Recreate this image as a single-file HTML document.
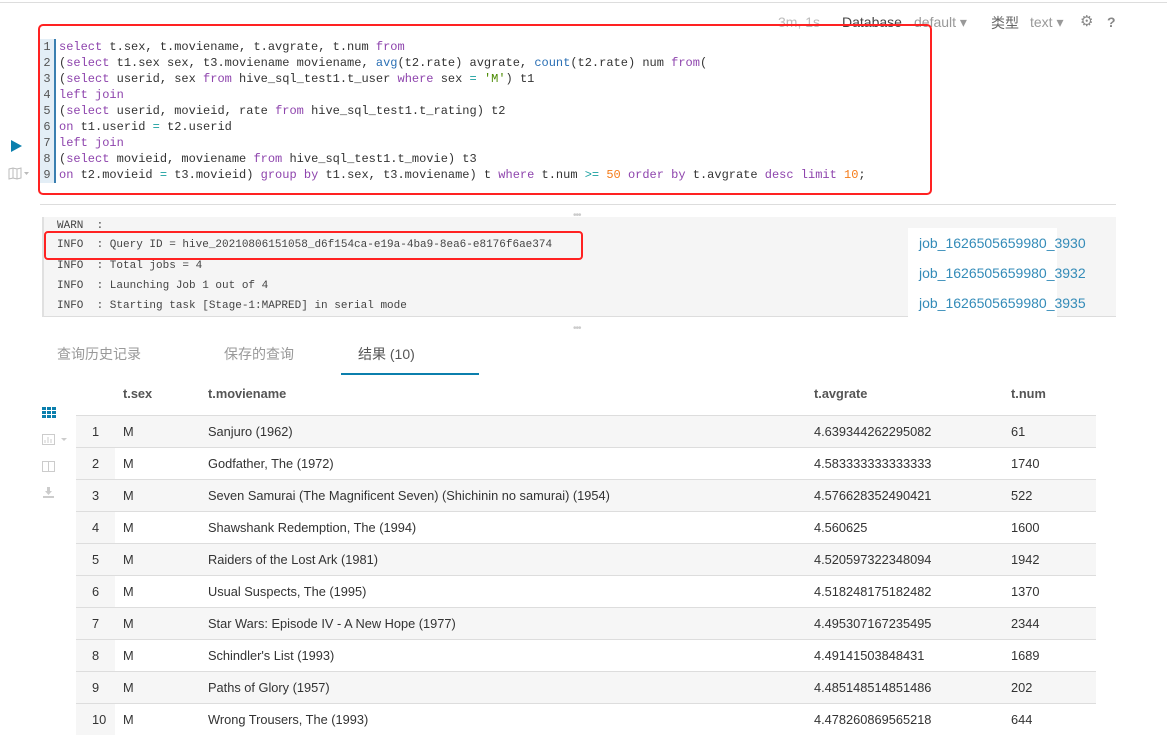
<!DOCTYPE html>
<html><head><meta charset="utf-8"><style>
*{box-sizing:border-box;margin:0;padding:0}
body{width:1167px;height:756px;background:#fff;font-family:"Liberation Sans","Noto Sans CJK SC",sans-serif;position:relative;overflow:hidden;color:#333}
.abs{position:absolute}
.mono{font-family:"Liberation Mono","DejaVu Sans Mono",monospace}
.code{left:59px;top:39px;font-size:12px;line-height:16px;white-space:pre;color:#333}
.gut{left:40px;top:39px;width:16px;height:144px;background:#e3eef6;border-right:2px solid #3a7fb0;font-size:12px;line-height:16px;text-align:center;color:#555}
.k{color:#8e44ad}.f{color:#2a6fb4}.n{color:#f57c1a}.s{color:#4a8a00}.o{color:#1aa0a0}
.log{left:42px;top:217px;width:1074px;height:100px;background:#f5f5f5;border-bottom:1px solid #ddd;border-left:2px solid #e0e0e0}
.log div{position:absolute;left:13px;font-size:11px;color:#444;white-space:pre}
.job{position:absolute;left:919px;font-size:14px;color:#338bb8}
table{position:absolute;left:76px;top:377px;width:1020px;border-collapse:collapse;font-size:12.8px}
th{text-align:left;font-weight:bold;color:#555;height:38px;padding:0 0 4px 0}
td{height:32px;border-top:1px solid #ddd;padding:0;color:#333}
tr.g td{background:#f6f6f6}
td.i{background:#f6f6f6;text-align:left;padding-left:16px}
</style></head><body>
<div class="abs" style="left:0;top:2px;width:1167px;height:1px;background:#ddd"></div>
<div class="abs" style="left:778px;top:14px;font-size:14px;color:#bbb">3m, 1s</div>
<div class="abs" style="left:842px;top:14px;font-size:14px;color:#444">Database</div>
<div class="abs" style="left:914px;top:14px;font-size:14px;color:#999">default ▾</div>
<div class="abs" style="left:991px;top:13px;font-size:14px;color:#666">类型</div>
<div class="abs" style="left:1030px;top:14px;font-size:14px;color:#999">text ▾</div>
<div class="abs" style="left:1080px;top:12px;font-size:15px;color:#888">⚙</div>
<div class="abs" style="left:1107px;top:14px;font-size:14px;color:#888;font-weight:bold">?</div>

<div class="abs gut mono">1<br>2<br>3<br>4<br>5<br>6<br>7<br>8<br>9</div>
<div class="abs code mono"><span class="k">select</span> t.sex, t.moviename, t.avgrate, t.num <span class="k">from</span>
(<span class="k">select</span> t1.sex sex, t3.moviename moviename, <span class="f">avg</span>(t2.rate) avgrate, <span class="f">count</span>(t2.rate) num <span class="k">from</span>(
(<span class="k">select</span> userid, sex <span class="k">from</span> hive_sql_test1.t_user <span class="k">where</span> sex <span class="o">=</span> <span class="s">'M'</span>) t1
<span class="k">left join</span>
(<span class="k">select</span> userid, movieid, rate <span class="k">from</span> hive_sql_test1.t_rating) t2
<span class="k">on</span> t1.userid <span class="o">=</span> t2.userid
<span class="k">left join</span>
(<span class="k">select</span> movieid, moviename <span class="k">from</span> hive_sql_test1.t_movie) t3
<span class="k">on</span> t2.movieid <span class="o">=</span> t3.movieid) <span class="k">group by</span> t1.sex, t3.moviename) t <span class="k">where</span> t.num <span class="o">&gt;=</span> <span class="n">50</span> <span class="k">order by</span> t.avgrate <span class="k">desc</span> <span class="k">limit</span> <span class="n">10</span>;</div>
<div class="abs" style="left:38px;top:24px;width:894px;height:171px;border:2px solid #f22;border-radius:5px"></div>
<svg class="abs" style="left:11px;top:140px" width="11" height="12"><path d="M0 0L11 6L0 12Z" fill="#0b7fad"/></svg>
<svg class="abs" style="left:8px;top:167px" width="22" height="13"><path d="M1 2L5 1L9 2L13 1V11L9 12L5 11L1 12Z M5 1V11 M9 2V12" fill="none" stroke="#bbb"/><path d="M16 5h5l-2.5 3z" fill="#bbb"/></svg>

<div class="abs" style="left:40px;top:204px;width:1076px;height:1px;background:#ddd"></div>
<div class="abs" style="left:573px;top:210px;font-size:10px;color:#ccc;letter-spacing:-1px">•••</div>
<div class="abs log mono">
<div style="top:3px">WARN  :</div>
<div style="top:22px">INFO  : Query ID = hive_20210806151058_d6f154ca-e19a-4ba9-8ea6-e8176f6ae374</div>
<div style="top:43px">INFO  : Total jobs = 4</div>
<div style="top:63px">INFO  : Launching Job 1 out of 4</div>
<div style="top:83px">INFO  : Starting task [Stage-1:MAPRED] in serial mode</div>
</div>
<div class="abs" style="left:908px;top:228px;width:149px;height:89px;background:#fff"></div>
<div class="job" style="top:235px">job_1626505659980_3930</div>
<div class="job" style="top:265px">job_1626505659980_3932</div>
<div class="job" style="top:295px">job_1626505659980_3935</div>
<div class="abs" style="left:44px;top:231px;width:539px;height:29px;border:2px solid #f22;border-radius:4px"></div>
<div class="abs" style="left:573px;top:323px;font-size:10px;color:#ccc;letter-spacing:-1px">•••</div>

<div class="abs" style="left:57px;top:344px;font-size:14px;color:#999">查询历史记录</div>
<div class="abs" style="left:224px;top:344px;font-size:14px;color:#999">保存的查询</div>
<div class="abs" style="left:358px;top:344px;font-size:14px;color:#555">结果 (10)</div>
<div class="abs" style="left:341px;top:373px;width:138px;height:2px;background:#0b7fad"></div>

<svg class="abs" style="left:42px;top:407px" width="14" height="12"><g fill="#0b7fad"><rect x="0" y="0" width="4" height="3"/><rect x="5" y="0" width="4" height="3"/><rect x="10" y="0" width="4" height="3"/><rect x="0" y="4" width="4" height="3"/><rect x="5" y="4" width="4" height="3"/><rect x="10" y="4" width="4" height="3"/><rect x="0" y="8" width="4" height="3"/><rect x="5" y="8" width="4" height="3"/><rect x="10" y="8" width="4" height="3"/></g></svg>
<svg class="abs" style="left:42px;top:434px" width="28" height="12"><rect x="0.5" y="0.5" width="12" height="10" fill="none" stroke="#ccc"/><path d="M3 9V6M6 9V3M9 9V5" stroke="#ccc"/><path d="M19 4h6l-3 3z" fill="#ccc"/></svg>
<svg class="abs" style="left:42px;top:461px" width="14" height="12"><rect x="0.5" y="0.5" width="12" height="10" fill="none" stroke="#ccc"/><path d="M6.5 1V11" stroke="#ccc"/></svg>
<svg class="abs" style="left:42px;top:487px" width="14" height="12"><path d="M5 0h3v4h2l-3.5 4L3 4h2z" fill="#ccc"/><rect x="1" y="9" width="11" height="2" fill="#ccc"/></svg>

<table>
<tr><th style="width:39px"></th><th style="width:93px;padding-left:8px">t.sex</th><th style="width:606px">t.moviename</th><th style="width:197px">t.avgrate</th><th>t.num</th></tr>
<tr class="g"><td class="i">1</td><td style="padding-left:8px">M</td><td>Sanjuro (1962)</td><td>4.639344262295082</td><td>61</td></tr>
<tr><td class="i">2</td><td style="padding-left:8px">M</td><td>Godfather, The (1972)</td><td>4.583333333333333</td><td>1740</td></tr>
<tr class="g"><td class="i">3</td><td style="padding-left:8px">M</td><td>Seven Samurai (The Magnificent Seven) (Shichinin no samurai) (1954)</td><td>4.576628352490421</td><td>522</td></tr>
<tr><td class="i">4</td><td style="padding-left:8px">M</td><td>Shawshank Redemption, The (1994)</td><td>4.560625</td><td>1600</td></tr>
<tr class="g"><td class="i">5</td><td style="padding-left:8px">M</td><td>Raiders of the Lost Ark (1981)</td><td>4.520597322348094</td><td>1942</td></tr>
<tr><td class="i">6</td><td style="padding-left:8px">M</td><td>Usual Suspects, The (1995)</td><td>4.518248175182482</td><td>1370</td></tr>
<tr class="g"><td class="i">7</td><td style="padding-left:8px">M</td><td>Star Wars: Episode IV - A New Hope (1977)</td><td>4.495307167235495</td><td>2344</td></tr>
<tr><td class="i">8</td><td style="padding-left:8px">M</td><td>Schindler's List (1993)</td><td>4.49141503848431</td><td>1689</td></tr>
<tr class="g"><td class="i">9</td><td style="padding-left:8px">M</td><td>Paths of Glory (1957)</td><td>4.485148514851486</td><td>202</td></tr>
<tr><td class="i">10</td><td style="padding-left:8px">M</td><td>Wrong Trousers, The (1993)</td><td>4.478260869565218</td><td>644</td></tr>
</table>
</body></html>
